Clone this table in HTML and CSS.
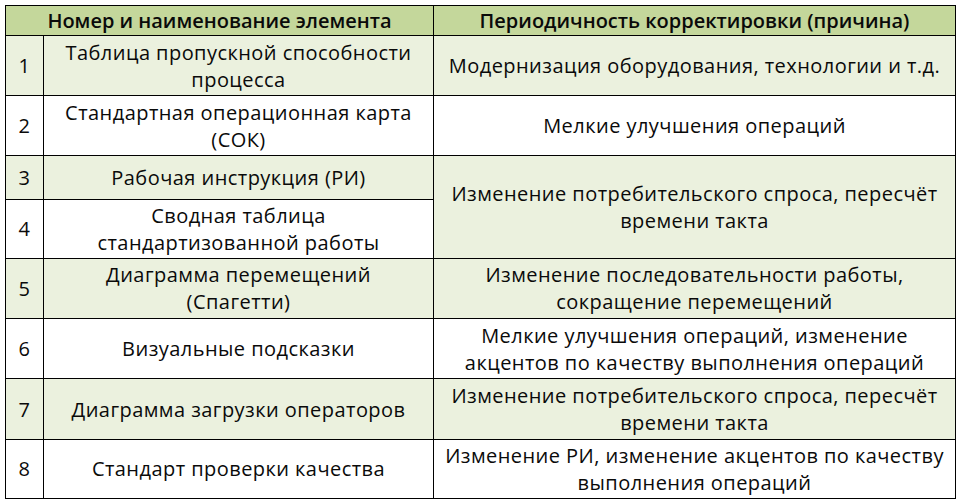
FILE: index.html
```html
<!DOCTYPE html>
<html lang="ru">
<head>
<meta charset="utf-8">
<title>Таблица</title>
<link rel="stylesheet" href="styles.css">
</head>
<body>
<table class="grid">
  <colgroup>
    <col class="c-num">
    <col class="c-name">
    <col class="c-reason">
  </colgroup>
  <thead>
    <tr class="h-row">
      <th colspan="2">Номер и наименование элемента</th>
      <th>Периодичность корректировки (причина)</th>
    </tr>
  </thead>
  <tbody>
    <tr class="alt r60">
      <td>1</td>
      <td>Таблица пропускной способности<br>процесса</td>
      <td>Модернизация оборудования, технологии и т.д.</td>
    </tr>
    <tr class="r60">
      <td>2</td>
      <td>Стандартная операционная карта<br>(СОК)</td>
      <td>Мелкие улучшения операций</td>
    </tr>
    <tr class="alt r43">
      <td>3</td>
      <td>Рабочая инструкция (РИ)</td>
      <td rowspan="2" class="alt-cell">Изменение потребительского спроса, пересчёт<br>времени такта</td>
    </tr>
    <tr class="r59">
      <td>4</td>
      <td>Сводная таблица<br>стандартизованной работы</td>
    </tr>
    <tr class="alt r60">
      <td>5</td>
      <td>Диаграмма перемещений<br>(Спагетти)</td>
      <td>Изменение последовательности работы,<br>сокращение перемещений</td>
    </tr>
    <tr class="r60">
      <td>6</td>
      <td>Визуальные подсказки</td>
      <td>Мелкие улучшения операций, изменение<br>акцентов по качеству выполнения операций</td>
    </tr>
    <tr class="alt r61">
      <td>7</td>
      <td>Диаграмма загрузки операторов</td>
      <td>Изменение потребительского спроса, пересчёт<br>времени такта</td>
    </tr>
    <tr class="r58">
      <td>8</td>
      <td>Стандарт проверки качества</td>
      <td>Изменение РИ, изменение акцентов по качеству<br>выполнения операций</td>
    </tr>
  </tbody>
</table>
</body>
</html>
```

FILE: styles.css
```css
html, body {
  margin: 0;
  padding: 0;
  background: #ffffff;
}
body {
  padding: 5px 0 0 5px;
  font-family: "Open Sans", "Noto Sans", Lato, sans-serif;
  color: #0a0a0a;
}
.grid {
  border-collapse: collapse;
  table-layout: fixed;
  width: 950px;
  font-size: 20px;
  line-height: 27px;
}
.c-num { width: 38px; }
.c-name { width: 390px; }
.c-reason { width: 522px; }
.grid th, .grid td {
  border: 1.5px solid #000;
  text-align: center;
  vertical-align: middle;
  padding: 0;
  white-space: nowrap;
}
.grid td {
  letter-spacing: 0.45px;
}
.grid th {
  background: #c4d79b;
  font-weight: 600;
  height: 29px;
}
.alt td, .alt-cell {
  background: #ebf1de;
}
.r60 td { height: 59.2px; }
.r43 td { height: 42.2px; }
.r59 td { height: 58.2px; }
.r61 td { height: 60.2px; }
.r58 td { height: 57.2px; }
```
